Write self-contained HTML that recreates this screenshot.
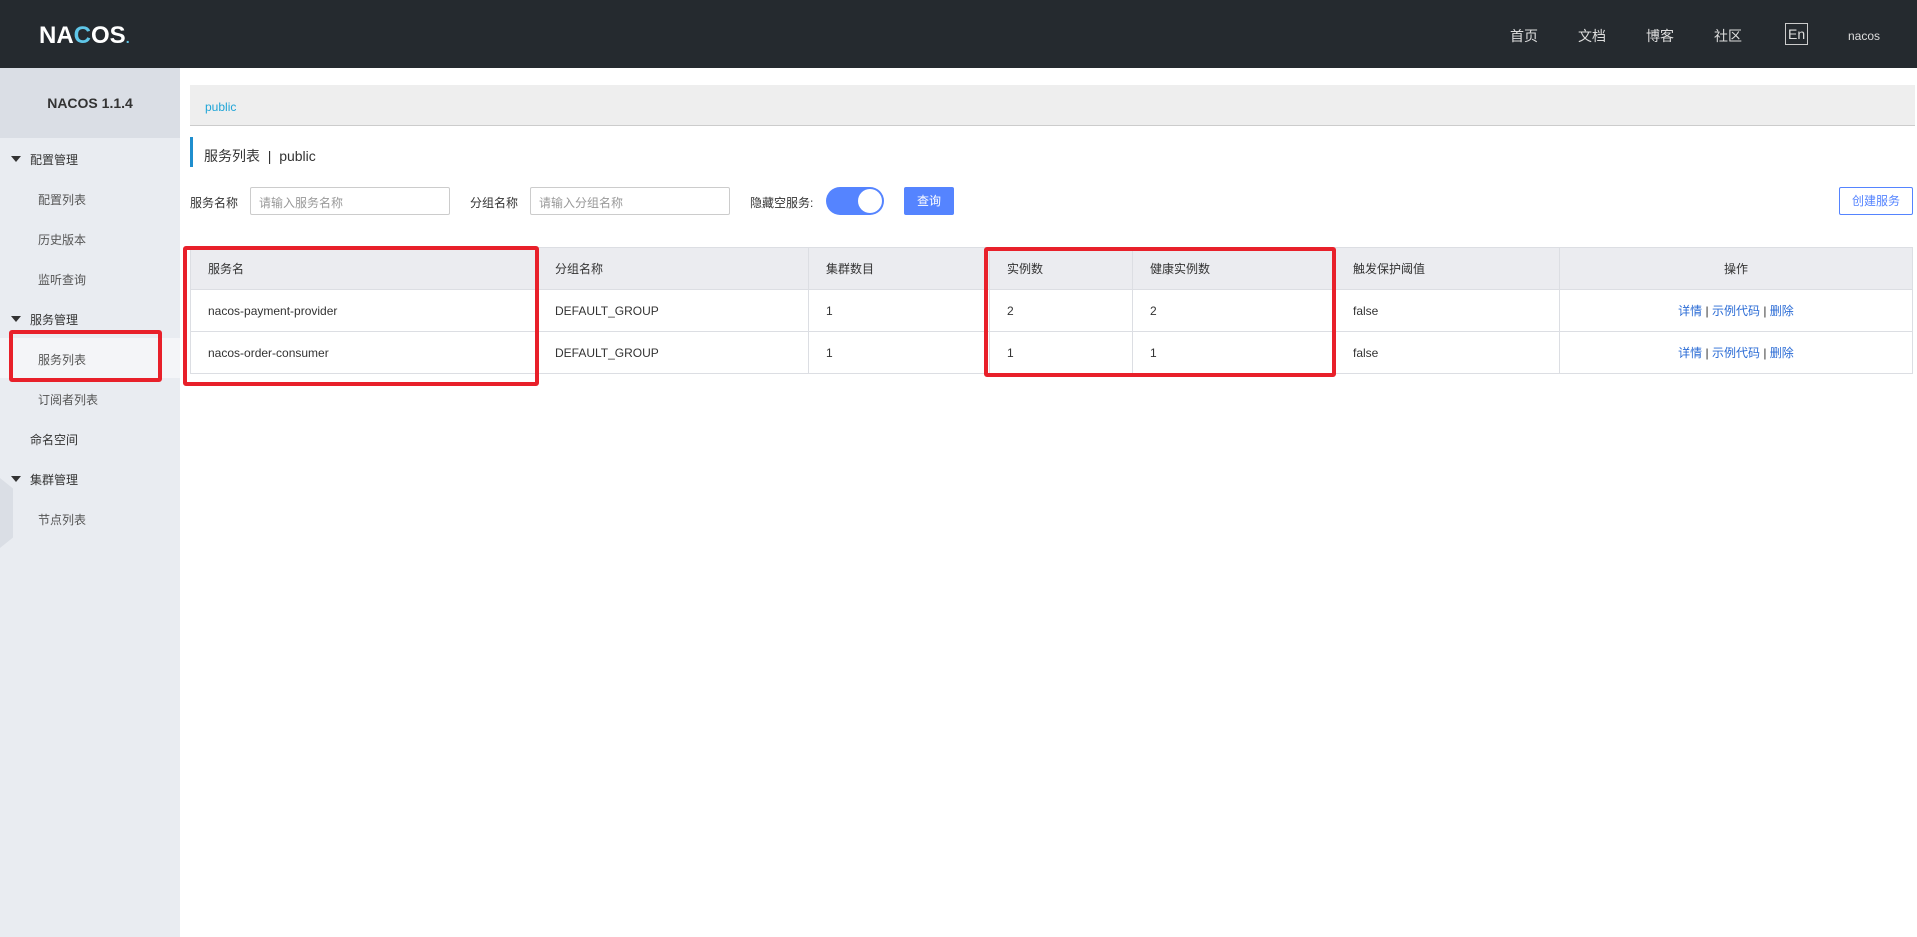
<!DOCTYPE html>
<html><head><meta charset="utf-8"><style>
*{margin:0;padding:0;box-sizing:border-box}
body{width:1917px;height:937px;overflow:hidden;background:#fff;font-family:"Liberation Sans","Noto Sans CJK SC",sans-serif;font-size:12px;color:#333;position:relative}
.hdr{position:absolute;left:0;top:0;width:1917px;height:68px;background:#252a2f}
.logo{position:absolute;left:39px;top:22px;color:#fff;font-size:24px;font-weight:bold;letter-spacing:0px}
.nav{position:absolute;top:26px;color:#ddd;font-size:14px}
.side{position:absolute;left:0;top:68px;width:180px;height:869px;background:#e9ecf1}
.ver{height:70px;background:#dadee5;text-align:center;line-height:70px;font-size:14px;font-weight:bold;color:#333}
.it{position:absolute;font-size:12px;color:#333}
.ch{left:38px;color:#555}
.par{left:30px}
.arr{position:absolute;left:11px;width:0;height:0;border-left:5px solid transparent;border-right:5px solid transparent;border-top:6px solid #333}
.red{position:absolute;border:4px solid #e8202a;border-radius:3px}
.bc{position:absolute;left:190px;top:85px;width:1725px;height:41px;background:#eeeeee;border-bottom:1px solid #ccc;color:#1fa5d7;padding:15px 0 0 15px;font-size:12px}
.ttl{position:absolute;left:190px;top:137px;height:30px;border-left:3px solid #1f8ece;padding:9px 0 0 11px;font-size:14px;color:#333}
.lbl{position:absolute;top:194px;font-size:12px;color:#333}
.inp{position:absolute;top:187px;width:200px;height:28px;border:1px solid #ccc;border-radius:2px;color:#999;padding:6px 8px;font-size:12px}
.btn{position:absolute;top:187px;height:28px;border-radius:2px;font-size:12px;text-align:center;line-height:28px}
table{position:absolute;left:190px;top:247px;width:1723px;border-collapse:collapse}
td,th{border:1px solid #dcdee3;height:42px;padding:0 0 0 17px;text-align:left;font-weight:normal;font-size:12px;color:#333}
th{background:#ebecf0}
.lnk{color:#2a6bd5}
</style></head><body>
<div class="hdr">
<div class="logo">NA<span style="color:#5fc6e8">C</span>OS<span style="color:#5fc6e8;font-size:14px">.</span></div>
<div class="nav" style="left:1510px">首页</div>
<div class="nav" style="left:1578px">文档</div>
<div class="nav" style="left:1646px">博客</div>
<div class="nav" style="left:1714px">社区</div>
<div class="nav" style="left:1785px;top:23px;border:1px solid #ccc;padding:0 2px;line-height:20px">En</div>
<div class="nav" style="left:1848px;font-size:12px;top:29px">nacos</div>
</div>
<div class="side"><div class="ver">NACOS 1.1.4</div>
<div style="position:absolute;left:0;top:270px;width:180px;height:40px;background:#f4f5f8"></div>
<div style="position:absolute;left:0;top:410px;width:13px;height:70px;background:#dadee5;clip-path:polygon(0 0,100% 15%,100% 85%,0 100%)"></div>
</div>
<div class="arr" style="top:156px"></div><div class="it par" style="top:151px">配置管理</div>
<div class="it ch" style="top:191px">配置列表</div>
<div class="it ch" style="top:231px">历史版本</div>
<div class="it ch" style="top:271px">监听查询</div>
<div class="arr" style="top:316px"></div><div class="it par" style="top:311px">服务管理</div>
<div class="it ch" style="top:351px">服务列表</div>
<div class="it ch" style="top:391px">订阅者列表</div>
<div class="it par" style="top:431px">命名空间</div>
<div class="arr" style="top:476px"></div><div class="it par" style="top:471px">集群管理</div>
<div class="it ch" style="top:511px">节点列表</div>
<div class="red" style="left:9px;top:330px;width:153px;height:52px"></div>

<div class="bc">public</div>
<div class="ttl">服务列表 &nbsp;|&nbsp; public</div>
<div class="lbl" style="left:190px">服务名称</div>
<div class="inp" style="left:250px">请输入服务名称</div>
<div class="lbl" style="left:470px">分组名称</div>
<div class="inp" style="left:530px">请输入分组名称</div>
<div class="lbl" style="left:750px">隐藏空服务:</div>
<div style="position:absolute;left:826px;top:187px;width:58px;height:28px;border-radius:14px;background:#5584ff"><div style="position:absolute;right:2px;top:2px;width:24px;height:24px;border-radius:12px;background:#fff"></div></div>
<div class="btn" style="left:904px;width:50px;background:#5584ff;color:#fff">查询</div>
<div class="btn" style="left:1839px;width:74px;border:1px solid #5584ff;color:#5584ff;background:#fff;line-height:26px">创建服务</div>

<table>
<tr><th style="width:347px">服务名</th><th style="width:271px">分组名称</th><th style="width:181px">集群数目</th><th style="width:143px">实例数</th><th style="width:203px">健康实例数</th><th style="width:224px">触发保护阈值</th><th style="text-align:center;padding:0">操作</th></tr>
<tr><td>nacos-payment-provider</td><td>DEFAULT_GROUP</td><td>1</td><td>2</td><td>2</td><td>false</td><td style="text-align:center;padding:0"><span class="lnk">详情</span> | <span class="lnk">示例代码</span> | <span class="lnk">删除</span></td></tr>
<tr><td>nacos-order-consumer</td><td>DEFAULT_GROUP</td><td>1</td><td>1</td><td>1</td><td>false</td><td style="text-align:center;padding:0"><span class="lnk">详情</span> | <span class="lnk">示例代码</span> | <span class="lnk">删除</span></td></tr>
</table>
<div class="red" style="left:183px;top:246px;width:356px;height:140px"></div>
<div class="red" style="left:984px;top:247px;width:352px;height:130px"></div>
</body></html>
